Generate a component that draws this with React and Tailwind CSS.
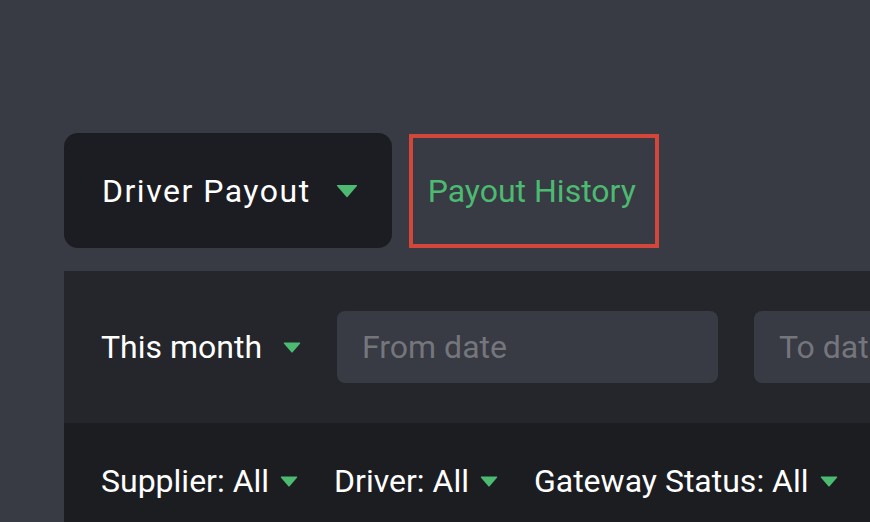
import React from "react";

function Caret({ className = "" }) {
  return (
    <svg viewBox="0 0 22 14" className={`shrink-0 ${className}`} aria-hidden="true">
      <path d="M1.5 1h19a.6.6 0 0 1 .45 1L11.5 13a.7.7 0 0 1-1 0L1.05 2A.6.6 0 0 1 1.5 1z" fill="#4cba71" />
    </svg>
  );
}

export default function App() {
  return (
    <div
      className="min-h-[522px] w-[870px] overflow-hidden bg-[#383a44] pl-[64px] pt-[133px] whitespace-nowrap"
      style={{ fontFamily: "Roboto, 'Noto Sans', sans-serif" }}
    >
      <div className="flex items-end">
        <button
          type="button"
          className="flex h-[115px] shrink-0 items-center rounded-[14px] bg-[#1c1d22] pl-[38px] pr-[34px] text-[32px] tracking-[1.5px] text-white"
        >
          <span>Driver Payout</span>
          <Caret className="ml-[25px] h-[14px] w-[22px]" />
        </button>
        <div className="ml-[17px] flex h-[114px] shrink-0 items-center border-[4px] border-[#d2473a] pl-[15px] pr-[19px] text-[32px] text-[#4cba71]">
          Payout History
        </div>
      </div>

      <div className="mt-[23px] w-[900px]">
        <div className="flex h-[152px] items-center bg-[#25262b] pl-[37px]">
          <span className="shrink-0 text-[32px] text-white">This month</span>
          <Caret className="ml-[21px] h-[13px] w-[18px]" />
          <div className="ml-[36px] flex h-[72px] w-[381px] shrink-0 items-center rounded-[8px] bg-[#383a44] pl-[25px] text-[32px] text-[#75767c]">
            From date
          </div>
          <div className="ml-[36px] flex h-[72px] w-[381px] shrink-0 items-center rounded-[8px] bg-[#383a44] pl-[25px] text-[32px] text-[#75767c]">
            To date
          </div>
        </div>
        <div className="flex h-[116px] items-center bg-[#1c1d21] pl-[37px] text-[32px] text-white">
          <span className="shrink-0">Supplier: All</span>
          <Caret className="ml-[11px] h-[13px] w-[18px]" />
          <span className="ml-[36px] shrink-0">Driver: All</span>
          <Caret className="ml-[11px] h-[13px] w-[18px]" />
          <span className="ml-[36px] shrink-0">Gateway Status: All</span>
          <Caret className="ml-[11px] h-[13px] w-[18px]" />
        </div>
      </div>
    </div>
  );
}
